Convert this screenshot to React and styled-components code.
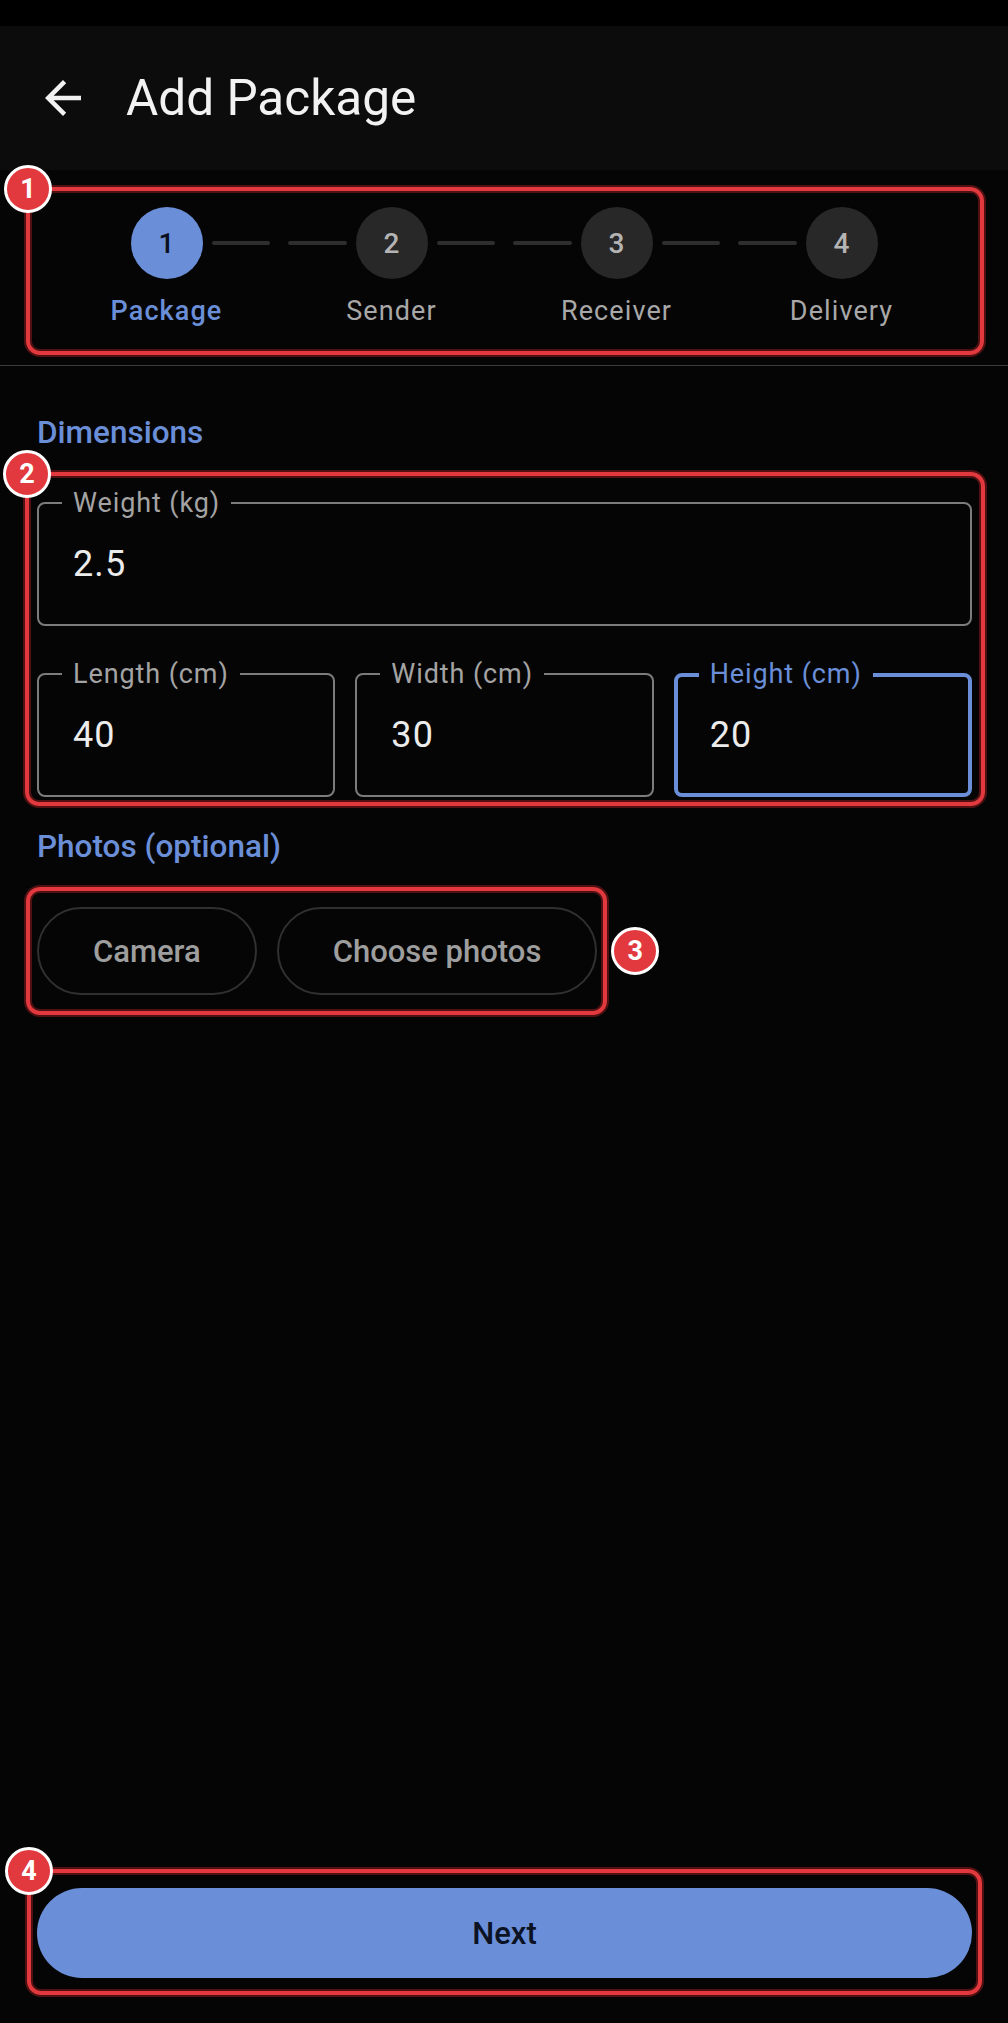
import React from "react";
import styled, { createGlobalStyle, css } from "styled-components";

const BLUE = "#6a8fd8";
const PAGE = "#050505";

const GlobalStyle = createGlobalStyle`
  html, body {
    margin: 0;
    padding: 0;
    background: ${PAGE};
  }
  body {
    font-family: Roboto, "Noto Sans", "Liberation Sans", sans-serif;
    -webkit-font-smoothing: antialiased;
  }
  * { box-sizing: border-box; }
`;

const steps = ["Package", "Sender", "Receiver", "Delivery"];

const fields = [
  { label: "Length (cm)", value: "40" },
  { label: "Width (cm)", value: "30" },
  { label: "Height (cm)", value: "20", focused: true },
];

const Screen = styled.div`
  min-height: 100vh;
  display: flex;
  flex-direction: column;
  background: ${PAGE};
`;

const StatusBar = styled.div`
  height: 26px;
  background: #000;
`;

const AppBar = styled.header`
  height: 144px;
  background: #0c0c0c;
  display: flex;
  align-items: center;
  padding-left: 36px;
  gap: 36px;
`;

const BackButton = styled.button`
  width: 54px;
  height: 54px;
  padding: 0;
  border: 0;
  background: none;
  display: flex;
  align-items: center;
  justify-content: center;
  svg { width: 54px; height: 54px; fill: #f2f2f2; }
`;

const Title = styled.h1`
  margin: 0;
  font-size: 49.5px;
  font-weight: 400;
  color: #f2f2f2;
  line-height: 60px;
`;

const StepperSection = styled.section`
  padding: 37px 54px 36px;
  border-bottom: 1px solid #3a3a3a;
`;

const StepGrid = styled.div`
  display: grid;
  grid-template-columns: repeat(4, 1fr);
`;

const Step = styled.div`
  display: flex;
  flex-direction: column;
  align-items: center;
`;

const StepTrack = styled.div`
  width: 100%;
  display: flex;
  align-items: center;
`;

const Connector = styled.span`
  flex: 1;
  height: 4px;
  margin: 0 9px;
  border-radius: 2px;
  background: #2e2e2e;
  visibility: ${(p) => (p.$hidden ? "hidden" : "visible")};
`;

const StepDot = styled.span`
  width: 72px;
  height: 72px;
  border-radius: 50%;
  display: flex;
  align-items: center;
  justify-content: center;
  font-size: 28px;
  font-weight: 500;
  background: ${(p) => (p.$active ? BLUE : "#282828")};
  color: ${(p) => (p.$active ? "#0b1020" : "#b4b4b4")};
`;

const StepLabel = styled.span`
  margin-top: 14px;
  font-size: 27px;
  line-height: 36px;
  letter-spacing: 1.1px;
  font-weight: ${(p) => (p.$active ? 500 : 400)};
  color: ${(p) => (p.$active ? BLUE : "#a8a8a8")};
`;

const Content = styled.main`
  flex: 1;
  display: flex;
  flex-direction: column;
  padding: 0 36px 45px 37px;
`;

const SectionTitle = styled.h2`
  margin: ${(p) => p.$top}px 0 ${(p) => p.$bottom}px;
  font-size: 31.5px;
  line-height: 40px;
  font-weight: 500;
  color: ${BLUE};
`;

const FieldGroup = styled.div`
  display: flex;
  flex-direction: column;
  gap: 47px;
`;

const FieldRow = styled.div`
  display: grid;
  grid-template-columns: repeat(3, 1fr);
  gap: 20px;
`;

const Field = styled.div`
  position: relative;
  height: 124px;
  border-radius: 8px;
  display: flex;
  align-items: center;
  padding-left: 34px;
  ${(p) =>
    p.$focused
      ? css`
          border: 4px solid ${BLUE};
          padding-left: 32px;
        `
      : css`
          border: 2px solid #7c7c7c;
        `}
`;

const FieldLabel = styled.span`
  position: absolute;
  left: ${(p) => (p.$focused ? 21 : 23)}px;
  top: ${(p) => (p.$focused ? -19 : -17)}px;
  padding: 0 11px;
  background: ${PAGE};
  font-size: 27px;
  line-height: 32px;
  letter-spacing: 0.9px;
  color: ${(p) => (p.$focused ? BLUE : "#a3a3a3")};
`;

const FieldValue = styled.span`
  font-size: 36px;
  letter-spacing: 1.1px;
  color: #ececec;
`;

const ButtonRow = styled.div`
  display: flex;
  gap: 20px;
`;

const OutlineButton = styled.button`
  height: 88px;
  padding: 0 54px;
  border-radius: 44px;
  border: 2px solid #303030;
  background: transparent;
  font-family: inherit;
  font-size: 31px;
  font-weight: 500;
  color: #9e9e9e;
`;

const Spacer = styled.div`
  flex: 1;
`;

const PrimaryButton = styled.button`
  width: 100%;
  height: 90px;
  border: 0;
  border-radius: 45px;
  background: ${BLUE};
  font-family: inherit;
  font-size: 31px;
  font-weight: 500;
  color: #0b1224;
`;

/* review callouts drawn over the screenshot */
const Marked = styled.div`
  position: relative;
  display: ${(p) => (p.$inline ? "inline-flex" : "block")};
  align-self: ${(p) => (p.$inline ? "flex-start" : "stretch")};
`;

const Ring = styled.span`
  position: absolute;
  top: ${(p) => -p.$o[0]}px;
  right: ${(p) => -p.$o[1]}px;
  bottom: ${(p) => -p.$o[2]}px;
  left: ${(p) => -p.$o[3]}px;
  border: 4px solid #e2393e;
  border-radius: 14px;
  box-shadow: 0 0 0 2px rgba(95, 20, 22, 0.85),
    inset 0 0 0 2px rgba(95, 20, 22, 0.85);
  pointer-events: none;
  z-index: 2;
`;

const Badge = styled.span`
  position: absolute;
  width: 48px;
  height: 48px;
  border-radius: 50%;
  border: 3px solid #fff;
  background: #e2393e;
  color: #fff;
  font-size: 27px;
  font-weight: 700;
  display: flex;
  align-items: center;
  justify-content: center;
  transform: translate(-50%, -50%);
  ${(p) =>
    p.$side === "right"
      ? css`
          left: calc(100% + 32px);
          top: 50%;
        `
      : css`
          left: -2px;
          top: -2px;
        `}
`;

function Callout({ n, out, side, inline, children }) {
  return (
    <Marked $inline={inline}>
      {children}
      <Ring $o={out}>
        <Badge $side={side}>{n}</Badge>
      </Ring>
    </Marked>
  );
}

function ArrowBack() {
  return (
    <svg viewBox="0 0 24 24">
      <path d="M20 11H7.83l5.59-5.59L12 4l-8 8 8 8 1.41-1.41L7.83 13H20v-2z" />
    </svg>
  );
}

export default function App() {
  return (
    <>
      <GlobalStyle />
      <Screen>
        <StatusBar />
        <AppBar>
          <BackButton aria-label="Back">
            <ArrowBack />
          </BackButton>
          <Title>Add Package</Title>
        </AppBar>

        <StepperSection>
          <Callout n={1} out={[20, 30, 26, 28]}>
            <StepGrid>
              {steps.map((s, i) => (
                <Step key={s}>
                  <StepTrack>
                    <Connector $hidden={i === 0} />
                    <StepDot $active={i === 0}>{i + 1}</StepDot>
                    <Connector $hidden={i === steps.length - 1} />
                  </StepTrack>
                  <StepLabel $active={i === 0}>{s}</StepLabel>
                </Step>
              ))}
            </StepGrid>
          </Callout>
        </StepperSection>

        <Content>
          <SectionTitle $top={47} $bottom={49}>Dimensions</SectionTitle>
          <Callout n={2} out={[30, 13, 9, 12]}>
            <FieldGroup>
              <Field>
                <FieldLabel>Weight (kg)</FieldLabel>
                <FieldValue>2.5</FieldValue>
              </Field>
              <FieldRow>
                {fields.map((f) => (
                  <Field key={f.label} $focused={f.focused}>
                    <FieldLabel $focused={f.focused}>{f.label}</FieldLabel>
                    <FieldValue>{f.value}</FieldValue>
                  </Field>
                ))}
              </FieldRow>
            </FieldGroup>
          </Callout>

          <SectionTitle $top={30} $bottom={40}>Photos (optional)</SectionTitle>
          <Callout n={3} out={[20, 10, 20, 11]} side="right" inline>
            <ButtonRow>
              <OutlineButton>Camera</OutlineButton>
              <OutlineButton>Choose photos</OutlineButton>
            </ButtonRow>
          </Callout>

          <Spacer />

          <Callout n={4} out={[19, 10, 17, 10]}>
            <PrimaryButton>Next</PrimaryButton>
          </Callout>
        </Content>
      </Screen>
    </>
  );
}
